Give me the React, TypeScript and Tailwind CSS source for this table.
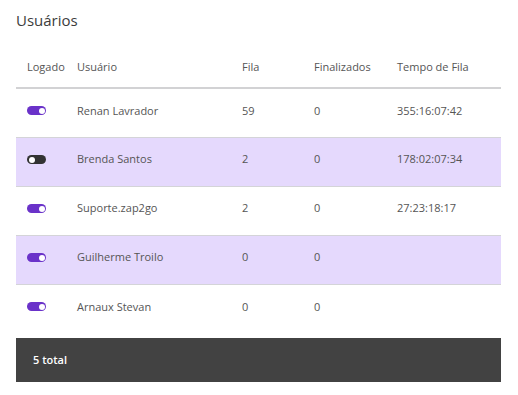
import React from "react";

type Row = {
  logged: boolean;
  name: string;
  queue: number;
  done: number;
  time: string;
};

const rows: Row[] = [
  { logged: true, name: "Renan Lavrador", queue: 59, done: 0, time: "355:16:07:42" },
  { logged: false, name: "Brenda Santos", queue: 2, done: 0, time: "178:02:07:34" },
  { logged: true, name: "Suporte.zap2go", queue: 2, done: 0, time: "27:23:18:17" },
  { logged: true, name: "Guilherme Troilo", queue: 0, done: 0, time: "" },
  { logged: true, name: "Arnaux Stevan", queue: 0, done: 0, time: "" },
];

function Toggle({ on }: { on: boolean }) {
  return (
    <span
      className={`flex h-[9px] w-[19px] items-center rounded-full px-[1.5px] ${
        on ? "justify-end bg-[#6a32c9]" : "justify-start bg-[#333333]"
      }`}
    >
      <span className="h-[6px] w-[6px] rounded-full bg-white" />
    </span>
  );
}

export default function App() {
  return (
    <div
      className="min-h-screen bg-white px-4 pt-2 text-[11px] text-[#555]"
      style={{ fontFamily: '"Open Sans", "Noto Sans", sans-serif' }}
    >
      <h2 className="h-6 text-[15px] leading-6 text-[#3c3c3c]">Usuários</h2>
      <table className="mt-4 w-[485px] table-fixed border-collapse">
        <colgroup>
          <col className="w-[50px]" />
          <col className="w-[165px]" />
          <col className="w-[72px]" />
          <col className="w-[83px]" />
          <col className="w-[115px]" />
        </colgroup>
        <thead>
          <tr className="h-[40px] border-b-2 border-[#d2d2d4] text-left">
            <th className="pl-[11px] font-normal">Logado</th>
            <th className="pl-[11px] font-normal">Usuário</th>
            <th className="pl-[11px] font-normal">Fila</th>
            <th className="pl-[11px] font-normal">Finalizados</th>
            <th className="pl-[11px] font-normal">Tempo de Fila</th>
          </tr>
        </thead>
        <tbody>
          {rows.map((r, i) => (
            <tr
              key={r.name}
              className={`h-[49px] ${i > 0 ? "border-t border-[#d4d4d8]" : ""} ${
                i % 2 === 1 ? "bg-[#e5d9fd]" : "bg-white"
              }`}
            >
              <td className="pl-[11px] pb-[4px]">
                <Toggle on={r.logged} />
              </td>
              <td className="pl-[11px] pb-[4px]">{r.name}</td>
              <td className="pl-[11px] pb-[4px]">{r.queue}</td>
              <td className="pl-[11px] pb-[4px]">{r.done}</td>
              <td className="pl-[11px] pb-[4px]">{r.time}</td>
            </tr>
          ))}
        </tbody>
      </table>
      <div className="mt-[5px] flex h-[44px] w-[485px] items-center bg-[#424242] pl-[17px] font-semibold text-white">
        5 total
      </div>
    </div>
  );
}
